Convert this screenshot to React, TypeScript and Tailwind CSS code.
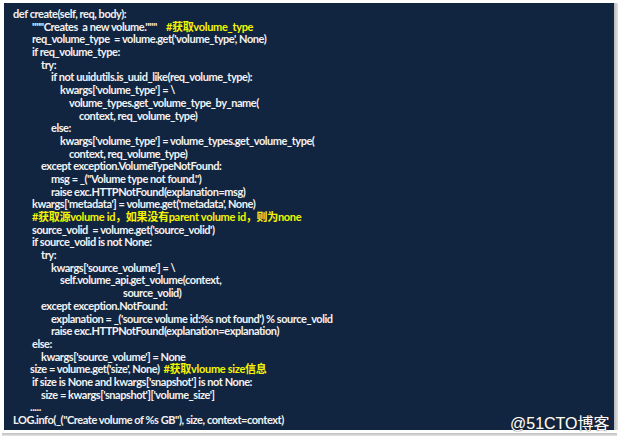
import React from 'react';

type Line = { x: number; code?: string; note?: string; gap?: number };

const lines: Line[] = [
  { x: 13, code: 'def create(self, req, body):' },
  { x: 32, code: '"""Creates  a new volume."""', note: '#获取volume_type', gap: 9 },
  { x: 32, code: "req_volume_type  = volume.get('volume_type', None)" },
  { x: 32, code: 'if req_volume_type:' },
  { x: 41, code: 'try:' },
  { x: 51, code: 'if not uuidutils.is_uuid_like(req_volume_type):' },
  { x: 60, code: "kwargs['volume_type'] = \\" },
  { x: 69, code: 'volume_types.get_volume_type_by_name(' },
  { x: 79, code: 'context, req_volume_type)' },
  { x: 51, code: 'else:' },
  { x: 60, code: "kwargs['volume_type'] = volume_types.get_volume_type(" },
  { x: 69, code: 'context, req_volume_type)' },
  { x: 41, code: 'except exception.VolumeTypeNotFound:' },
  { x: 51, code: 'msg = _("Volume type not found.")' },
  { x: 51, code: 'raise exc.HTTPNotFound(explanation=msg)' },
  { x: 32, code: "kwargs['metadata'] = volume.get('metadata', None)" },
  { x: 32, note: '#获取源volume id，如果没有parent volume id，则为none' },
  { x: 32, code: "source_volid  = volume.get('source_volid')" },
  { x: 32, code: 'if source_volid is not None:' },
  { x: 41, code: 'try:' },
  { x: 51, code: "kwargs['source_volume'] = \\" },
  { x: 60, code: 'self.volume_api.get_volume(context,' },
  { x: 123, code: 'source_volid)' },
  { x: 41, code: 'except exception.NotFound:' },
  { x: 51, code: "explanation = _('source volume id:%s not found') % source_volid" },
  { x: 51, code: 'raise exc.HTTPNotFound(explanation=explanation)' },
  { x: 32, code: 'else:' },
  { x: 41, code: "kwargs['source_volume'] = None" },
  { x: 30, code: "size = volume.get('size', None)", note: '#获取vloume size信息', gap: 4 },
  { x: 32, code: "if size is None and kwargs['snapshot'] is not None:" },
  { x: 41, code: "size = kwargs['snapshot']['volume_size']" },
  { x: 30, code: '.....' },
  { x: 13, code: 'LOG.info(_("Create volume of %s GB"), size, context=context)' },
];

export default function App() {
  return (
    <div className="relative w-[619px] h-[443px] bg-white overflow-hidden">
      <div className="pt-[3px] pl-[4px]">
        <div className="flex">
          <div className="w-[610px] h-[427px] bg-[#122540] pt-[5px] font-['Lato','Noto_Sans_CJK_SC',sans-serif] font-bold text-[11px] tracking-[-0.45px] text-[#f2f2f2] whitespace-pre">
            {lines.map((l, i) => (
              <div key={i} className="h-[12.7px] leading-[12.7px]" style={{ paddingLeft: l.x - 4 }}>
                {l.code && <span>{l.code}</span>}
                {l.note && (
                  <span className="text-[#f5f500] tracking-[-0.3px]" style={{ marginLeft: l.gap ?? 0 }}>
                    {l.note}
                  </span>
                )}
              </div>
            ))}
          </div>
          <div className="w-[4px] h-[427px] bg-gradient-to-r from-[#b9b9b9] to-[#e2e2e2]" />
        </div>
        <div className="mt-[3px] -ml-[2px] w-[615px] h-[3px] bg-gradient-to-b from-[#bdbdbd] to-[#e4e4e4]" />
      </div>
      <div className="absolute left-[510px] top-[414px] font-['Liberation_Sans','Noto_Sans_CJK_SC',sans-serif] text-[16px] leading-[20px] text-white [text-shadow:0_0_1px_#333,0_0_1px_#333]">
        @51CTO博客
      </div>
    </div>
  );
}
